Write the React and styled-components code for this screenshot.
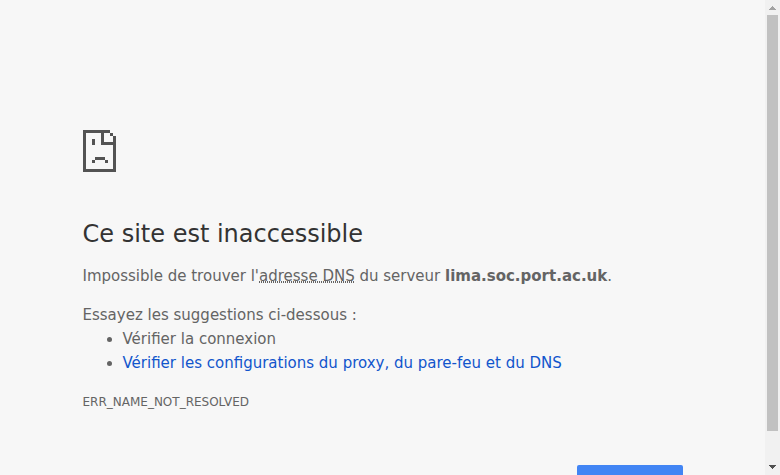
import React from 'react';
import styled, { createGlobalStyle } from 'styled-components';

const GlobalStyle = createGlobalStyle`
  html, body { margin: 0; padding: 0; overflow: hidden; background: #f7f7f7; }
`;

const Page = styled.div`
  display: flex;
  width: 780px;
  height: 475px;
  overflow: hidden;
  background: #f7f7f7;
  color: #646464;
  font-family: 'DejaVu Sans', sans-serif;
  font-size: 15px;
  line-height: 24px;
`;

const Viewport = styled.main`
  flex: 1;
  box-sizing: border-box;
  padding: 130px 82px 0 82.5px;
  overflow: hidden;
`;

const SadPage = styled.svg`
  display: block;
  width: 33px;
  height: 42px;
  margin: 0 0 47px 0.5px;
`;

const Title = styled.h1`
  margin: 0 0 15px;
  color: #333;
  font-size: 24px;
  font-weight: 400;
  line-height: 30px;
`;

const Message = styled.p`
  margin: 0 0 15px;
  white-space: nowrap;
`;

const Abbr = styled.abbr`
  text-decoration: none;
  background: repeating-linear-gradient(90deg, #646464 0 1px, transparent 1px 2px)
    left bottom 2px / 100% 2px no-repeat;
`;

const Suggestions = styled.ul`
  margin: 0;
  padding: 0 0 0 40px;
`;

const Link = styled.a`
  color: #1155cc;
  text-decoration: none;
`;

const ErrorCode = styled.div`
  margin-top: 15px;
  font-size: 12px;
`;

const Actions = styled.div`
  display: flex;
  justify-content: flex-end;
  margin-top: 51px;
`;

const ReloadButton = styled.button`
  width: 106px;
  height: 36px;
  border: 0;
  border-radius: 2px;
  background: #4285f4;
`;

const Scrollbar = styled.div`
  display: flex;
  flex-direction: column;
  align-items: center;
  width: 15px;
  background: #f1f1f1;
`;

const Arrow = styled.svg`
  width: 15px;
  height: 15px;
  flex: none;
`;

const Thumb = styled.div`
  width: 11px;
  height: 416px;
  background: #c1c1c1;
`;

const Track = styled.div`
  flex: 1;
`;

export default function App() {
  return (
    <>
      <GlobalStyle />
      <Page>
        <Viewport>
          <SadPage viewBox="0 0 33 42" shapeRendering="crispEdges" fill="#535353">
            <path d="M0 0h27v3H3v36h27V15H18V3h3v9h9V6h3v36H0zM27 3h3v3h-3z" />
            <path d="M9 9h3v6H9zM12 27h10v3H12zM9 30h3v3H9zM22 30h3v3h-3z" />
          </SadPage>
          <Title>Ce site est inaccessible</Title>
          <Message>
            Impossible de trouver l'<Abbr>adresse DNS</Abbr> du serveur <strong>lima.soc.port.ac.uk</strong>.
          </Message>
          <div>Essayez les suggestions ci-dessous :</div>
          <Suggestions>
            <li>Vérifier la connexion</li>
            <li><Link>Vérifier les configurations du proxy, du pare-feu et du DNS</Link></li>
          </Suggestions>
          <ErrorCode>ERR_NAME_NOT_RESOLVED</ErrorCode>
          <Actions><ReloadButton aria-label="Actualiser" /></Actions>
        </Viewport>
        <Scrollbar>
          <Arrow viewBox="0 0 15 15" shapeRendering="crispEdges"><path d="M7 6h1v1h1v1h1v1h1v1H4V9h1V8h1V7h1z" fill="#a3a3a3" /></Arrow>
          <Thumb />
          <Track />
          <Arrow viewBox="0 0 15 15" shapeRendering="crispEdges"><path d="M4 5h7v1h-1v1H9v1H8v1H7V8H6V7H5V6H4z" fill="#505050" /></Arrow>
        </Scrollbar>
      </Page>
    </>
  );
}
